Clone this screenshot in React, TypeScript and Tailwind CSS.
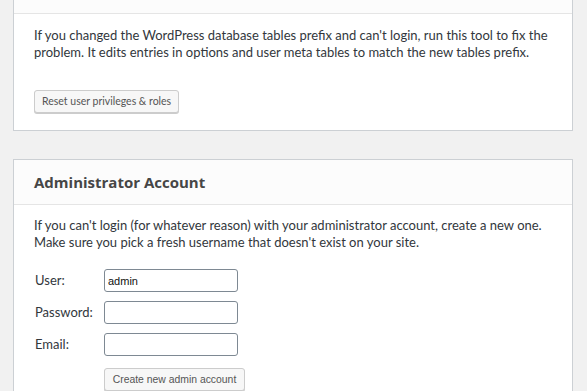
const font = { fontFamily: "Lato, 'Open Sans', sans-serif" };

const Card = ({ title, children, className = "" }: { title: string; children: React.ReactNode; className?: string }) => (
  <div className={`bg-white border border-[#ccd0d4] ${className}`}>
    <div className="h-[45px] flex items-center px-[20px] bg-[#fcfcfc] border-b border-[#e5e5e5]">
      <h2 className="text-[15px] font-bold text-[#464646]" style={{ fontFamily: "'Open Sans', sans-serif" }}>
        {title}
      </h2>
    </div>
    {children}
  </div>
);

const Field = ({ label, value = "" }: { label: string; value?: string }) => (
  <div className="flex items-center h-[23px]">
    <label className="w-[70px] pl-[1px] text-[13px] text-[#32373c]">{label}</label>
    <input
      defaultValue={value}
      className="w-[134px] h-[23px] px-[3px] border border-[#7e8993] rounded-[3px] bg-white text-[11px] text-[#111] outline-none"
      style={{ fontFamily: "'Liberation Sans', Arial, sans-serif" }}
    />
  </div>
);

export default function App() {
  return (
    <div className="h-[391px] overflow-hidden bg-[#f1f1f1] pl-[13px] pr-[14px]" style={font}>
      <Card title="Reset Privileges" className="-mt-[32px] mb-[28px]">
        <div className="px-[20px] pt-[13px] pb-[17px]">
          <p className="text-[13px] leading-[17px] text-[#32373c]">
            If you changed the WordPress database tables prefix and can't login, run this tool to fix the
            <br />
            problem. It edits entries in options and user meta tables to match the new tables prefix.
          </p>
          <button className="mt-[29px] h-[23px] px-[7px] bg-[#f7f7f7] border border-[#cccccc] rounded-[3px] shadow-[0_1px_0_#cccccc] text-[10.5px] text-[#555]">
            Reset user privileges &amp; roles
          </button>
        </div>
      </Card>

      <Card title="Administrator Account">
        <div className="px-[20px] pt-[12px]">
          <p className="text-[13px] leading-[17px] text-[#32373c]">
            If you can't login (for whatever reason) with your administrator account, create a new one.
            <br />
            Make sure you pick a fresh username that doesn't exist on your site.
          </p>
          <div className="mt-[18px] flex flex-col gap-[9px]">
            <Field label="User:" value="admin" />
            <Field label="Password:" />
            <Field label="Email:" />
            <div className="pl-[70px]">
              <button
                className="h-[23px] w-[141px] bg-[#f7f7f7] border border-[#cccccc] rounded-[3px] shadow-[0_1px_0_#cccccc] text-[10.4px] text-[#555]"
                style={{ fontFamily: "'Liberation Sans', Arial, sans-serif" }}
              >
                Create new admin account
              </button>
            </div>
          </div>
        </div>
      </Card>
    </div>
  );
}
